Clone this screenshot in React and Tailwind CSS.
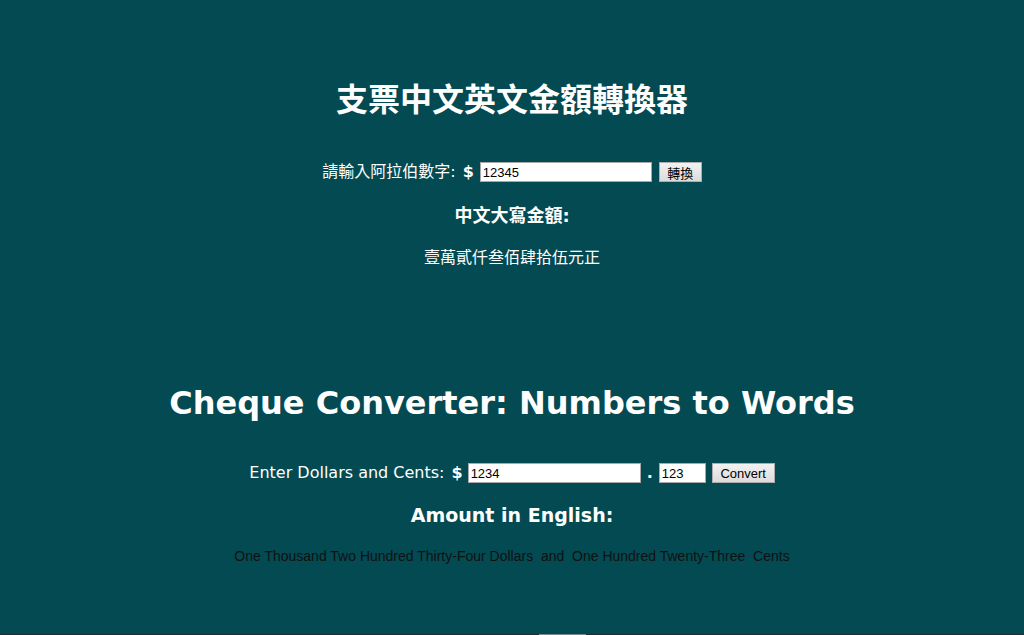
export default function App() {
  const font = { fontFamily: '"DejaVu Sans", "Noto Sans CJK TC", sans-serif' };
  return (
    <div className="w-full h-[635px] bg-[#034a52] flex flex-col items-center text-white relative overflow-hidden" style={font}>
      <h1 className="pt-[80px] text-[32px] leading-[40px] font-bold" style={{ fontFamily: '"DejaVu Sans", "Noto Sans CJK TC", sans-serif' }}>支票中文英文金額轉換器</h1>
      <div className="mt-[42px] h-[20px] flex items-center text-[16px]">
        <span>請輸入阿拉伯數字:</span>
        <span className="ml-[7px] font-bold">$</span>
        <input
          className="ml-[6px] w-[172px] h-[20px] bg-white border border-[#a9a9a9] text-black text-[13px] px-[2px] outline-none"
          style={{ fontFamily: '"Liberation Sans", Arial, sans-serif' }}
          defaultValue="12345"
        />
        <button
          className="ml-[7px] h-[20px] w-[43px] border border-[#adadad] bg-gradient-to-b from-[#f2f2f2] to-[#dcdcdc] text-black text-[13px] leading-none"
          style={{ fontFamily: '"Noto Sans CJK TC", sans-serif' }}
        >
          轉換
        </button>
      </div>
      <h3 className="mt-[22px] text-[18px] leading-[24px] font-bold">中文大寫金額:</h3>
      <p className="mt-[16px] text-[16px] leading-[24px]" style={{ fontFamily: '"Noto Sans CJK TC", sans-serif' }}>壹萬貳仟叁佰肆拾伍元正</p>

      <h1 className="mt-[113px] text-[32px] leading-[44px] font-bold">Cheque Converter: Numbers to Words</h1>
      <div className="mt-[38px] h-[20px] flex items-center text-[16px]">
        <span>Enter Dollars and Cents:</span>
        <span className="ml-[7px] font-bold">$</span>
        <input
          className="ml-[5px] w-[173px] h-[20px] bg-white border border-[#a9a9a9] text-black text-[13px] px-[2px] outline-none"
          style={{ fontFamily: '"Liberation Sans", Arial, sans-serif' }}
          defaultValue="1234"
        />
        <span className="ml-[6px] font-bold">.</span>
        <input
          className="ml-[6px] w-[47px] h-[20px] bg-white border border-[#a9a9a9] text-black text-[13px] px-[2px] outline-none"
          style={{ fontFamily: '"Liberation Sans", Arial, sans-serif' }}
          defaultValue="123"
        />
        <button
          className="ml-[6px] h-[20px] w-[63px] border border-[#adadad] bg-gradient-to-b from-[#f2f2f2] to-[#dcdcdc] text-black text-[13px] leading-none"
          style={{ fontFamily: '"Liberation Sans", Arial, sans-serif' }}
        >
          Convert
        </button>
      </div>
      <h3 className="mt-[20px] text-[19px] leading-[24px] font-bold">Amount in English:</h3>
      <p
        className="mt-[19px] text-[14px] leading-[20px] text-[#111111] whitespace-pre"
        style={{ fontFamily: '"Liberation Sans", Arial, sans-serif' }}
      >
        {"One Thousand Two Hundred Thirty-Four Dollars  and  One Hundred Twenty-Three  Cents"}
      </p>
      <div className="absolute bottom-0 left-0 right-0 h-[1px] bg-[#1c2f33]">
        <div className="absolute left-[539px] w-[47px] h-[1px] bg-[#7a8a8d]" />
      </div>
    </div>
  );
}
